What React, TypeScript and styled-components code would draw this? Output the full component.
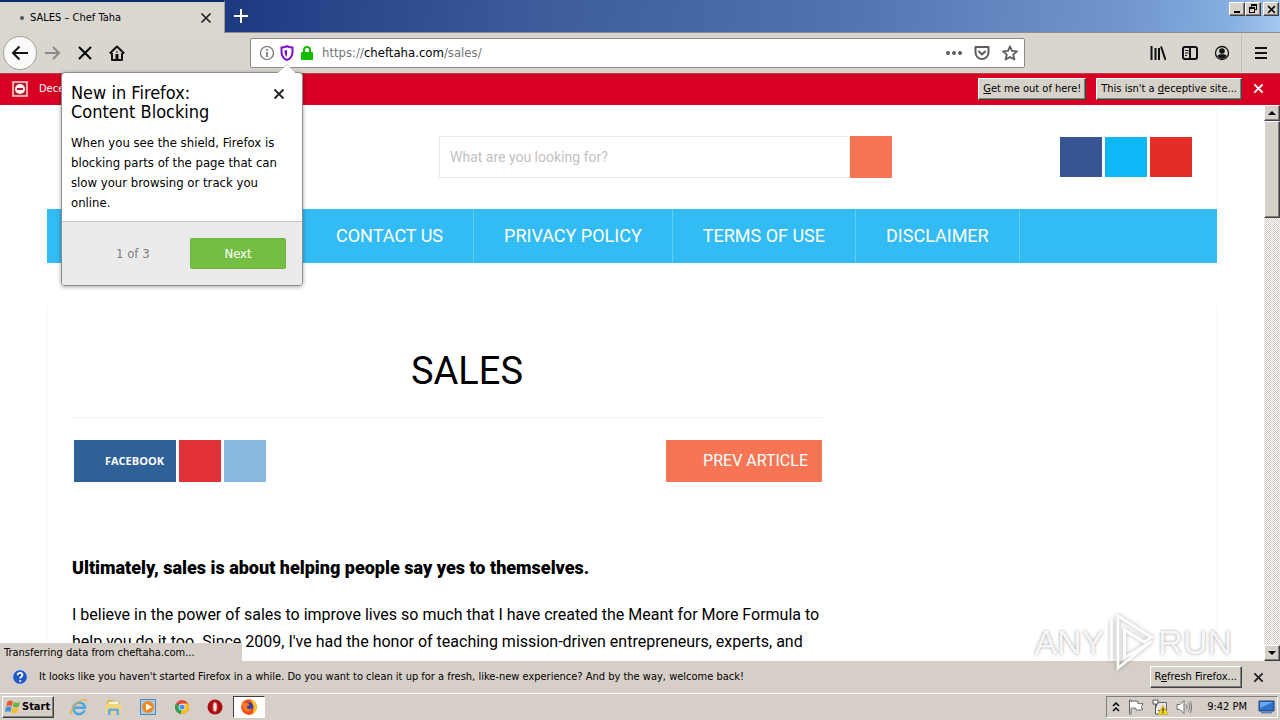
import React from "react";
import styled, { createGlobalStyle } from "styled-components";

const ui = `"DejaVu Sans Condensed", "DejaVu Sans", sans-serif`;
const web = `Roboto, sans-serif`;

const GlobalStyle = createGlobalStyle`
  * { box-sizing: border-box; }
  body { margin: 0; background: #fff; overflow: hidden; }
  button, input { font: inherit; color: inherit; border: 0; padding: 0; margin: 0; border-radius: 0; }
  a { color: inherit; text-decoration: none; }
  svg { display: block; flex: none; }
`;

const Desktop = styled.div`
  display: flex;
  flex-direction: column;
  height: 100vh;
  position: relative;
  font: 11px/14px ${ui};
  color: #000;
`;

/* ---------- title bar ---------- */
const TitleBar = styled.header`
  display: flex;
  height: 33px;
  flex: none;
  border-bottom: 1px solid #8f8d88;
  background: linear-gradient(95deg, #0a246a 0, #203d83 20%, #3c5c9c 42%, #5072ae 65%, #7197cd 88%, #86aee0 96%, #a4c9f0 100%);
`;
const Tab = styled.div`
  display: flex;
  align-items: center;
  width: 225px;
  height: 33px;
  padding: 0 10px 0 20px;
  background: #dad7d1;
  border-top: 2px solid #0b2a70;
  border-right: 1px solid #a09e9a;
`;
const Dot = styled.span`
  width: 4px;
  height: 4px;
  margin-right: 6px;
  border-radius: 50%;
  background: #555;
`;
const TabTitle = styled.span`
  flex: 1;
`;
const IconButton = styled.button<{ $w?: number }>`
  display: flex;
  align-items: center;
  justify-content: center;
  width: ${(p) => p.$w ?? 16}px;
  background: none;
`;
const WindowButtons = styled.div`
  display: flex;
  margin: 2px 1px 0 auto;
  height: 14px;
`;
const bevel = `
  border: 1px solid;
  border-color: #fff #404040 #404040 #fff;
  box-shadow: inset -1px -1px 0 #808080;
  background: #d6d2ca;
`;
const WindowButton = styled.button<{ $gap?: boolean }>`
  ${bevel}
  width: 16px;
  height: 14px;
  margin-left: ${(p) => (p.$gap ? 2 : 0)}px;
  display: flex;
  align-items: center;
  justify-content: center;
`;

/* ---------- navigation bar ---------- */
const NavBar = styled.div`
  display: flex;
  align-items: center;
  height: 40px;
  flex: none;
  padding: 0 12px 0 3px;
  background: #d9d6d0;
`;
const BackButton = styled.button`
  display: flex;
  align-items: center;
  justify-content: center;
  width: 34px;
  height: 34px;
  border: 1px solid #a3a19c;
  border-radius: 50%;
  background: #fafaf9;
`;
const NavIcons = styled.div`
  display: flex;
  gap: 16px;
  margin-left: 8px;
`;
const UrlBox = styled.div`
  display: flex;
  align-items: center;
  flex: 1;
  height: 30px;
  margin: 0 125px 0 125px;
  padding: 0 6px 0 8px;
  gap: 4px;
  border: 1px solid #8d8b87;
  border-radius: 2px;
  background: #fff;
`;
const Url = styled.div`
  flex: 1;
  margin-left: 3px;
  font-size: 13px;
  line-height: 16px;
  color: #757575;
  b { font-weight: 400; color: #000; }
`;
const UrlActions = styled.div`
  display: flex;
  gap: 12px;
`;
const ToolIcons = styled.div`
  display: flex;
  gap: 16px;
`;
const MenuSlot = styled.div`
  display: flex;
  align-items: center;
  height: 38px;
  margin-left: 11px;
  padding-left: 12px;
  border-left: 1px solid #c4c1bb;
`;

/* ---------- warning bar ---------- */
const WarningBar = styled.div`
  display: flex;
  align-items: center;
  height: 32px;
  flex: none;
  padding: 0 16px 2px 12px;
  background: #d70022;
  border-top: 1px solid #b5404c;
  color: #fff;
`;
const WarningText = styled.span`
  flex: 1;
  margin-left: 11px;
`;
const ClassicButton = styled.button`
  ${bevel}
  height: 22px;
  padding: 0 4px;
  margin-right: 10px;
  color: #000;
  white-space: nowrap;
  u { text-underline-offset: 1px; }
`;

/* ---------- web page ---------- */
const Viewport = styled.main`
  display: flex;
  flex: 1;
  min-height: 0;
  background: #fff;
`;
const Page = styled.div`
  flex: 1;
  overflow: hidden;
  font-family: ${web};
`;
const Container = styled.div`
  width: calc(100% - 94px);
  max-width: 1170px;
  margin: 0 auto;
`;
const SiteHeader = styled.div`
  display: flex;
  align-items: flex-start;
  padding: 31px 24px 31px 392px;
  border-right: 1px solid #fafafa;
`;
const Search = styled.form`
  display: flex;
  width: 453px;
`;
const SearchInput = styled.input`
  flex: 1;
  height: 42px;
  min-width: 0;
  padding: 0 10px;
  border: 1px solid #ebebeb;
  background: #fff;
  font-size: 14px;
  &::placeholder { color: #c2c2c2; opacity: 1; }
`;
const SearchButton = styled.button`
  width: 42px;
  background: #f57555;
`;
const Tiles = styled.div`
  display: flex;
  gap: 3px;
`;
const HeaderTiles = styled(Tiles)`
  margin: 1px 0 0 auto;
`;
const Tile = styled.a<{ $c: string; $h?: number; $w?: number }>`
  display: flex;
  align-items: center;
  justify-content: flex-end;
  width: ${(p) => p.$w ?? 42}px;
  height: ${(p) => p.$h ?? 42}px;
  padding-right: 12px;
  background: ${(p) => p.$c};
  color: #fff;
  font: 700 11px/14px "Open Sans", sans-serif;
`;
const SiteNav = styled.nav`
  display: flex;
  height: 54px;
  padding-left: 259px;
  background: #33bbf3;
`;
const SiteLink = styled.a`
  display: flex;
  align-items: center;
  padding: 0 30px;
  border-right: 1px solid #66cdf7;
  color: #fff;
  font-size: 18px;
  line-height: 24px;
  white-space: nowrap;
`;
const Article = styled.article`
  margin-top: 42px;
  padding: 42px 24px 0;
  border: solid #fafafa;
  border-width: 0 1px;
`;
const Column = styled.div`
  max-width: 750px;
`;
const Title = styled.h1`
  margin: 0;
  padding: 0 0 22px 40px;
  border-bottom: 1px solid #f0f0f0;
  font-size: 38px;
  line-height: 48px;
  font-weight: 400;
  text-align: center;
`;
const ShareRow = styled.div`
  display: flex;
  justify-content: space-between;
  padding: 22px 0 72px 2px;
`;
const PrevLink = styled.a`
  display: flex;
  align-items: center;
  justify-content: flex-end;
  width: 156px;
  height: 42px;
  padding-right: 14px;
  background: #f57555;
  color: #fff;
  font-size: 16px;
`;
const Para = styled.p`
  margin: 0 0 20px;
  font-size: 16px;
  line-height: 27px;
`;
const Lead = styled(Para)`
  font-size: 18px;
  font-weight: 900;
`;
const Scrollbar = styled.div`
  display: flex;
  flex-direction: column;
  width: 16px;
  background: repeating-conic-gradient(#d4d0c8 0 25%, #fff 0 50%) 0 0 / 2px 2px;
`;
const ScrollButton = styled.button`
  ${bevel}
  width: 16px;
  height: 16px;
  display: flex;
  align-items: center;
  justify-content: center;
`;
const Thumb = styled.div`
  ${bevel}
  height: 97px;
  margin-bottom: auto;
`;

/* ---------- bottom bars ---------- */
const HelpBar = styled.div`
  display: flex;
  align-items: center;
  height: 32px;
  flex: none;
  padding: 0 16px 0 12px;
  background: #d6cfc8;
`;
const HelpText = styled.span`
  flex: 1;
  margin-left: 11px;
  white-space: nowrap;
`;
const TaskBar = styled.footer`
  display: flex;
  align-items: center;
  height: 27px;
  flex: none;
  padding: 0 2px;
  border-top: 1px solid #fff;
  background: #d6cfc8;
`;
const StartButton = styled.button`
  ${bevel}
  display: flex;
  align-items: center;
  gap: 1px;
  width: 52px;
  height: 22px;
  padding-left: 2px;
  background: #d6cfc8;
  font-weight: 700;
`;
const Launchers = styled.div`
  display: flex;
  align-items: center;
  gap: 16px;
  margin-left: 15px;
`;
const Launcher = styled.button`
  display: flex;
  background: none;
`;
const ActiveTask = styled.button`
  display: flex;
  align-items: center;
  justify-content: center;
  width: 32px;
  height: 22px;
  margin-left: 8px;
  background: #fff;
  border: 1px solid;
  border-color: #404040 #fff #fff #404040;
`;
const Tray = styled.div`
  display: flex;
  align-items: center;
  gap: 8px;
  height: 22px;
  margin-left: auto;
  padding: 0 2px 0 5px;
  border: 1px solid;
  border-color: #808080 #fff #fff #808080;
`;
const Clock = styled.span`
  margin: 0 3px 0 7px;
  white-space: nowrap;
`;

/* ---------- overlays ---------- */
const StatusTip = styled.div`
  position: absolute;
  left: 0;
  bottom: 59px;
  width: 242px;
  height: 18px;
  padding: 3px 4px 1px;
  background: #d6cfc8;
`;
const Popup = styled.section`
  position: absolute;
  left: 61px;
  top: 72px;
  width: 242px;
  border: 1px solid #8c8c8c;
  border-radius: 4px;
  background: #fff;
  box-shadow: 0 1px 4px rgba(0, 0, 0, 0.35);
`;
const PopupArrow = styled.svg`
  position: absolute;
  right: 3px;
  top: -9px;
`;
const PopupHead = styled.div`
  display: flex;
  justify-content: space-between;
  align-items: flex-start;
  padding: 10px 14px 0 9px;
`;
const PopupTitle = styled.h2`
  margin: 0;
  font-size: 18px;
  line-height: 19px;
  font-weight: 400;
`;
const PopupClose = styled(IconButton)`
  height: 22px;
  width: 18px;
`;
const PopupBody = styled.p`
  margin: 12px 9px 8px;
  font-size: 13px;
  line-height: 20px;
`;
const PopupFoot = styled.div`
  display: flex;
  align-items: center;
  justify-content: space-between;
  height: 64px;
  padding: 0 16px 0 54px;
  border-top: 1px solid #c8c8c8;
  border-radius: 0 0 3px 3px;
  background: #ebebeb;
  font-size: 13px;
  color: #808080;
`;
const NextButton = styled.button`
  width: 96px;
  height: 31px;
  border: 1px solid #6cb43d;
  border-radius: 2px;
  background: #74bf43;
  color: #fff;
`;
const Watermark = styled.div`
  position: absolute;
  right: 48px;
  bottom: 46px;
  display: flex;
  align-items: center;
  color: rgba(255, 255, 255, 0.9);
  font: 34px/64px "Liberation Sans", sans-serif;
  text-shadow: 0 0 3px rgba(0, 0, 0, 0.4);
`;
const PlayMark = styled.svg`
  filter: drop-shadow(0 0 2px rgba(0, 0, 0, 0.35));
`;

const Cross = ({ size = 12, color = "#000", w = 2 }: { size?: number; color?: string; w?: number }) => (
  <svg width={size} height={size} viewBox="0 0 12 12" stroke={color} strokeWidth={w} fill="none">
    <path d="M1.500 1.500l9 9M10.500 1.500l-9 9" />
  </svg>
);

export default function App() {
  return (
    <Desktop>
      <GlobalStyle />
      <TitleBar>
        <Tab>
          <Dot />
          <TabTitle>SALES – Chef Taha</TabTitle>
          <IconButton aria-label="Close tab"><Cross color="#222" w={1.7} /></IconButton>
        </Tab>
        <IconButton aria-label="New tab" $w={32}>
          <svg width="16" height="16" viewBox="0 0 16 16" stroke="#fff" strokeWidth="2"><path d="M8 1v14M1 8h14" /></svg>
        </IconButton>
        <WindowButtons>
          <WindowButton aria-label="Minimize">
            <svg width="10" height="10" viewBox="0 0 10 10"><path d="M2 7h6v2H2z" /></svg>
          </WindowButton>
          <WindowButton aria-label="Restore">
            <svg width="10" height="10" viewBox="0 0 10 10" shapeRendering="crispEdges"><path d="M3 0h6v6H7V5h1V2H4v1H3zM1 3h6v6H1zM2 5v3h4V5z" fillRule="evenodd" /></svg>
          </WindowButton>
          <WindowButton aria-label="Close" $gap><Cross size={9} w={2} /></WindowButton>
        </WindowButtons>
      </TitleBar>

      <NavBar>
        <BackButton aria-label="Back">
          <svg width="18" height="16" viewBox="0 0 18 16" fill="none" stroke="#111" strokeWidth="2"><path d="M17 8H2.500M8.500 1.500L2 8l6.500 6.500" /></svg>
        </BackButton>
        <NavIcons>
          <IconButton aria-label="Forward">
            <svg width="16" height="16" viewBox="0 0 16 16" fill="none" stroke="#8b8986" strokeWidth="2"><path d="M0 8h14M8 2l6 6-6 6" /></svg>
          </IconButton>
          <IconButton aria-label="Stop"><Cross size={16} w={1.5} /></IconButton>
          <IconButton aria-label="Home">
            <svg width="16" height="16" viewBox="0 0 16 16" fill="none" stroke="#111" strokeWidth="2"><path d="M.8 8.500L8 1.500l7.200 7M3 8v7h10V8" strokeLinejoin="round" /><path d="M8 9v6" strokeWidth="3" /><path d="M7.500 7h1" /></svg>
          </IconButton>
        </NavIcons>
        <UrlBox>
          <svg width="16" height="16" viewBox="0 0 16 16" fill="none" stroke="#6b6b6b"><circle cx="8" cy="8" r="6.500" strokeWidth="1.200" /><path d="M8 7v5M8 4v1.700" strokeWidth="1.600" /></svg>
          <svg width="16" height="16" viewBox="0 0 16 16" fill="none" stroke="#8010d0" strokeWidth="2"><path d="M2.500 2.500C4.500 2.500 6 2 8 1.200c2 .8 3.500 1.300 5.500 1.300V7c0 4-2.500 6.800-5.500 8-3-1.200-5.500-4-5.500-8z" /><path d="M8 5c-1 .3-2 .5-2.500.5C5.500 9 6 10.500 8 12z" fill="#8010d0" stroke="none" /></svg>
          <svg width="16" height="16" viewBox="0 0 16 16"><rect x="2" y="7" width="12" height="8" rx="1" fill="#12bc00" /><path d="M5 8V5a3 3 0 016 0v3" fill="none" stroke="#12bc00" strokeWidth="2" /></svg>
          <Url>https://<b>cheftaha.com</b>/sales/</Url>
          <UrlActions>
            <IconButton aria-label="Page actions">
              <svg width="16" height="16" viewBox="0 0 16 16" fill="#5c5c5c"><circle cx="2" cy="8" r="2" /><circle cx="8" cy="8" r="2" /><circle cx="14" cy="8" r="2" /></svg>
            </IconButton>
            <IconButton aria-label="Save to Pocket">
              <svg width="16" height="16" viewBox="0 0 16 16" fill="none" stroke="#5c5c5c" strokeWidth="2" strokeLinecap="round" strokeLinejoin="round"><path d="M1.500 2h13v5.500a6.500 6.500 0 01-13 0z" /><path d="M5 6.500l3 3 3-3" /></svg>
            </IconButton>
            <IconButton aria-label="Bookmark">
              <svg width="16" height="16" viewBox="0 0 16 16" fill="none" stroke="#5c5c5c" strokeWidth="1.800" strokeLinejoin="round"><path d="M8 1.300l2 4.600 5 .4-3.800 3.300 1.200 4.900L8 11.900l-4.400 2.600 1.200-4.900L1 6.300l5-.4z" /></svg>
            </IconButton>
          </UrlActions>
        </UrlBox>
        <ToolIcons>
          <IconButton aria-label="Library">
            <svg width="16" height="16" viewBox="0 0 16 16" stroke="#111" strokeWidth="2"><path d="M1.500 1v14M5.500 3v12M9 3v12M11 1.500l4.500 13.500" /></svg>
          </IconButton>
          <IconButton aria-label="Sidebars">
            <svg width="16" height="16" viewBox="0 0 16 16" fill="none" stroke="#111" strokeWidth="2"><rect x="1" y="2" width="14" height="12" rx="2" /><path d="M8 2v12" /><path d="M3 5.500h3.500M3 8h3.500M3 10.500h2" strokeWidth="1" /></svg>
          </IconButton>
          <IconButton aria-label="Account">
            <svg width="16" height="16" viewBox="0 0 16 16"><circle cx="8" cy="8" r="6.500" fill="none" stroke="#111" strokeWidth="1.300" /><circle cx="8" cy="6" r="2.800" fill="#111" /><path d="M3.300 11c1-1.500 2.700-1.700 4.700-1.700s3.700.2 4.700 1.700A5.500 5.500 0 013.300 11z" fill="#111" /></svg>
          </IconButton>
        </ToolIcons>
        <MenuSlot>
          <IconButton aria-label="Menu" $w={14}>
            <svg width="12" height="12" viewBox="0 0 12 12" stroke="#111" strokeWidth="2"><path d="M0 1h12M0 6h12M0 11h12" /></svg>
          </IconButton>
        </MenuSlot>
      </NavBar>

      <WarningBar>
        <svg width="16" height="16" viewBox="0 0 16 16"><path d="M1 1h14v14H1z" fill="#b3202c" stroke="#f3d9d6" strokeWidth="1.500" /><circle cx="8" cy="8" r="5" fill="#fbeeee" /><path d="M5 7h6v2H5z" fill="#c8102e" /></svg>
        <WarningText>Dece</WarningText>
        <ClassicButton><u>G</u>et me out of here!</ClassicButton>
        <ClassicButton>This isn't a <u>d</u>eceptive site...</ClassicButton>
        <IconButton aria-label="Dismiss warning" $w={12}><Cross color="#fff" size={11} /></IconButton>
      </WarningBar>

      <Viewport>
        <Page>
          <Container>
            <SiteHeader>
              <Search>
                <SearchInput aria-label="Search" placeholder="What are you looking for?" />
                <SearchButton type="button" aria-label="Search" />
              </Search>
              <HeaderTiles>
                <Tile href="#" aria-label="Facebook" $c="#375593" $h={40} />
                <Tile href="#" aria-label="Twitter" $c="#10b7f7" $h={40} />
                <Tile href="#" aria-label="YouTube" $c="#e52d27" $h={40} />
              </HeaderTiles>
            </SiteHeader>
            <SiteNav>
              <SiteLink href="#">CONTACT US</SiteLink>
              <SiteLink href="#">PRIVACY POLICY</SiteLink>
              <SiteLink href="#">TERMS OF USE</SiteLink>
              <SiteLink href="#">DISCLAIMER</SiteLink>
            </SiteNav>
            <Article>
              <Column>
                <Title>SALES</Title>
                <ShareRow>
                  <Tiles>
                    <Tile href="#" $c="#2f6199" $w={102}>FACEBOOK</Tile>
                    <Tile href="#" aria-label="Pinterest" $c="#e03038" />
                    <Tile href="#" aria-label="Twitter" $c="#8bb8e0" />
                  </Tiles>
                  <PrevLink href="#">PREV ARTICLE</PrevLink>
                </ShareRow>
                <Lead>Ultimately, sales is about helping people say yes to themselves.</Lead>
                <Para>
                  I believe in the power of sales to improve lives so much that I have created the Meant for More Formula to
                  help you do it too. Since 2009, I've had the honor of teaching mission-driven entrepreneurs, experts, and
                </Para>
              </Column>
            </Article>
          </Container>
        </Page>
        <Scrollbar>
          <ScrollButton aria-label="Scroll up"><svg width="8" height="4" viewBox="0 0 8 4"><path d="M4 0l4 4H0z" /></svg></ScrollButton>
          <Thumb />
          <ScrollButton aria-label="Scroll down"><svg width="8" height="4" viewBox="0 0 8 4"><path d="M4 4l4-4H0z" /></svg></ScrollButton>
        </Scrollbar>
      </Viewport>

      <HelpBar>
        <svg width="16" height="16" viewBox="0 0 16 16"><circle cx="8" cy="8" r="7.300" fill="#2458c4" stroke="#c3d3f0" /><path d="M5.700 6.200C5.800 3 10.500 3.200 10.400 6c0 1.700-2.200 1.700-2.200 3.500" fill="none" stroke="#fff" strokeWidth="1.800" /><circle cx="8.200" cy="12" r="1.100" fill="#fff" /></svg>
        <HelpText>It looks like you haven't started Firefox in a while. Do you want to clean it up for a fresh, like-new experience? And by the way, welcome back!</HelpText>
        <ClassicButton>R<u>e</u>fresh Firefox...</ClassicButton>
        <IconButton aria-label="Dismiss message" $w={12}><Cross size={11} color="#222" /></IconButton>
      </HelpBar>

      <TaskBar>
        <StartButton>
          <svg width="16" height="16" viewBox="0 0 16 16"><path d="M2.500 2.500C4.500 1 6 1.500 8 2.500L6.800 7.300c-2-1-3.500-1-5.500 0z" fill="#e8582a" /><path d="M9 3c2 1 4 1 6 0l-1.300 4.800c-2 1-4 1-6 0z" fill="#6db33f" /><path d="M1 8.300c2-1 3.500-1 5.500 0l-1.200 4.600c-2-1-3.600-1-5.300.2z" fill="#3f8fd8" /><path d="M7.400 8.800c2 1 4 1 6 0l-1.200 4.700c-2 1-4 1-6 0z" fill="#f8c12c" /></svg>
          Start
        </StartButton>
        <Launchers>
          <Launcher aria-label="Internet Explorer">
            <svg width="20" height="18" viewBox="0 0 20 18" fill="none"><path d="M15.500 12.300A5.700 5.700 0 116 6.500c3.500-4 10-1.500 9.800 3.300H6" stroke="#49a8e0" strokeWidth="2.600" /><path d="M3.500 15.500C-.5 18 2 10 8 5c5-4.200 10.500-5 9.300-1" stroke="#e3b13c" strokeWidth="1.300" /></svg>
          </Launcher>
          <Launcher aria-label="Explorer">
            <svg width="18" height="18" viewBox="0 0 18 18"><path d="M2 2h6l1 2h6v10H2z" fill="#e2b94e" /><path d="M3.500 4h10v4h-10z" fill="#fdf8e4" /><path d="M1 6h15v9H1z" fill="#f3d67c" /><path d="M3 17v-5c0-1 1-1.500 2-1.500h7c1 0 2 .5 2 1.500v5h-2.500v-4h-6v4z" fill="#6aaae2" /></svg>
          </Launcher>
          <Launcher aria-label="Media Player">
            <svg width="18" height="18" viewBox="0 0 18 18"><path d="M1.500 1.500h15v15h-15z" fill="#a8cdec" stroke="#4f86bd" /><circle cx="9" cy="9" r="6" fill="#f08a1d" /><path d="M7 5.500l6 3.500-6 3.500z" fill="#fff" /></svg>
          </Launcher>
          <Launcher aria-label="Chrome">
            <svg width="18" height="18" viewBox="0 0 18 18"><circle cx="9" cy="9" r="7" fill="#dd4b3e" /><path d="M9 9L2.900 5.500A7 7 0 008.500 16z" fill="#2ba24c" /><path d="M9 9h7A7 7 0 018 15.900z" fill="#fbc116" /><path d="M9 5.500h6a7 7 0 011 3.500l-4 2z" fill="#fbc116" /><circle cx="9" cy="9" r="3.300" fill="#fff" /><circle cx="9" cy="9" r="2.600" fill="#4a8af4" /></svg>
          </Launcher>
          <Launcher aria-label="Opera">
            <svg width="18" height="18" viewBox="0 0 18 18"><circle cx="8" cy="9" r="7.500" fill="#a80f14" /><ellipse cx="8" cy="9" rx="2.200" ry="5" fill="#f4e4e4" stroke="#d33" /></svg>
          </Launcher>
        </Launchers>
        <ActiveTask aria-label="Firefox">
          <svg width="18" height="18" viewBox="0 0 16 16"><circle cx="8" cy="8" r="7" fill="#f4511e" /><path d="M9 1c4 1 6.500 4 6 8a7 7 0 01-4 5.200C13 10 12 5 9 1z" fill="#fdc02f" /><circle cx="8" cy="7.500" r="3.800" fill="#3b3fa0" /><path d="M1.500 5l1-2.500L5 4.500c2 0 3 .5 3.500 2L6 7.500c0 2 2 3 4.500 1.500-1 3-5 4-7 1.500z" fill="#fb7a25" /></svg>
        </ActiveTask>
        <Tray>
          <svg width="8" height="12" viewBox="0 0 8 12" fill="none" stroke="#000" strokeWidth="1.500"><path d="M1 5l3-3 3 3M1 10l3-3 3 3" /></svg>
          <svg width="16" height="16" viewBox="0 0 16 16" fill="#fff" stroke="#666"><path d="M1.500 1v14h1.500V9.500c2-1 3.500-.5 5 0v1.500c2 .5 4 0 6.500-.5L13.500 7.500l1.500-3c-2 0-3.500.5-5 0V2.500C7 1.500 5 2 3 2.500V1z" /></svg>
          <svg width="16" height="16" viewBox="0 0 16 16"><path d="M4.500 3.500h10v8h-10z" fill="#e8e8e8" stroke="#666" /><path d="M1 1h5v4H1zM3.500 5v10H7" fill="#fff" stroke="#555" /><path d="M11 6l5 9.500H6z" fill="#f8d41c" stroke="#b8960c" strokeWidth=".5" /><path d="M10.500 9h1v3.500h-1zM10.500 13.300h1v1h-1z" /></svg>
          <svg width="16" height="16" viewBox="0 0 16 16" fill="#fff" stroke="#707070"><path d="M1 5.500h3L8 1.500v13l-4-4H1z" /><path d="M10 5.500c1.300 1.500 1.300 3.500 0 5M12 3.500c2.300 2.500 2.300 6.500 0 9M14 2c2 3 2 9 0 12" fill="none" /></svg>
          <Clock>9:42 PM</Clock>
          <svg width="17" height="14" viewBox="0 0 17 14"><path d="M1 1h15v10H1z" fill="#2b72cc" stroke="#1b3f78" /><path d="M2 2h13L2 8z" fill="#6aa8ea" /><path d="M3 12h11v1.500H3z" fill="#5a86b8" /></svg>
        </Tray>
      </TaskBar>

      <StatusTip>Transferring data from cheftaha.com...</StatusTip>
      <Popup>
        <PopupArrow width="24" height="10" viewBox="0 0 24 10"><path d="M0 9.500h2L12 .7l9 8.800h3V10H0z" fill="#fff" stroke="none" /><path d="M2 8.500L12 .5l9 8" fill="none" stroke="#b5b3af" strokeWidth=".6" /></PopupArrow>
        <PopupHead>
          <PopupTitle>New in Firefox:<br />Content Blocking</PopupTitle>
          <PopupClose aria-label="Close tip"><Cross size={12} color="#222" w={1.8} /></PopupClose>
        </PopupHead>
        <PopupBody>When you see the shield, Firefox is blocking parts of the page that can slow your browsing or track you online.</PopupBody>
        <PopupFoot>
          <span>1 of 3</span>
          <NextButton>Next</NextButton>
        </PopupFoot>
      </Popup>
      <Watermark aria-hidden="true">
        <span>ANY</span>
        <PlayMark width="54" height="64" viewBox="0 0 58 64" fill="none" stroke="#fff" strokeWidth="3" opacity=".9"><path d="M15 50V4l36 23-8 5-21-13v30l21-13 8-5-36 29z" /><path d="M8 8v44" /></PlayMark>
        <span>RUN</span>
      </Watermark>
    </Desktop>
  );
}
